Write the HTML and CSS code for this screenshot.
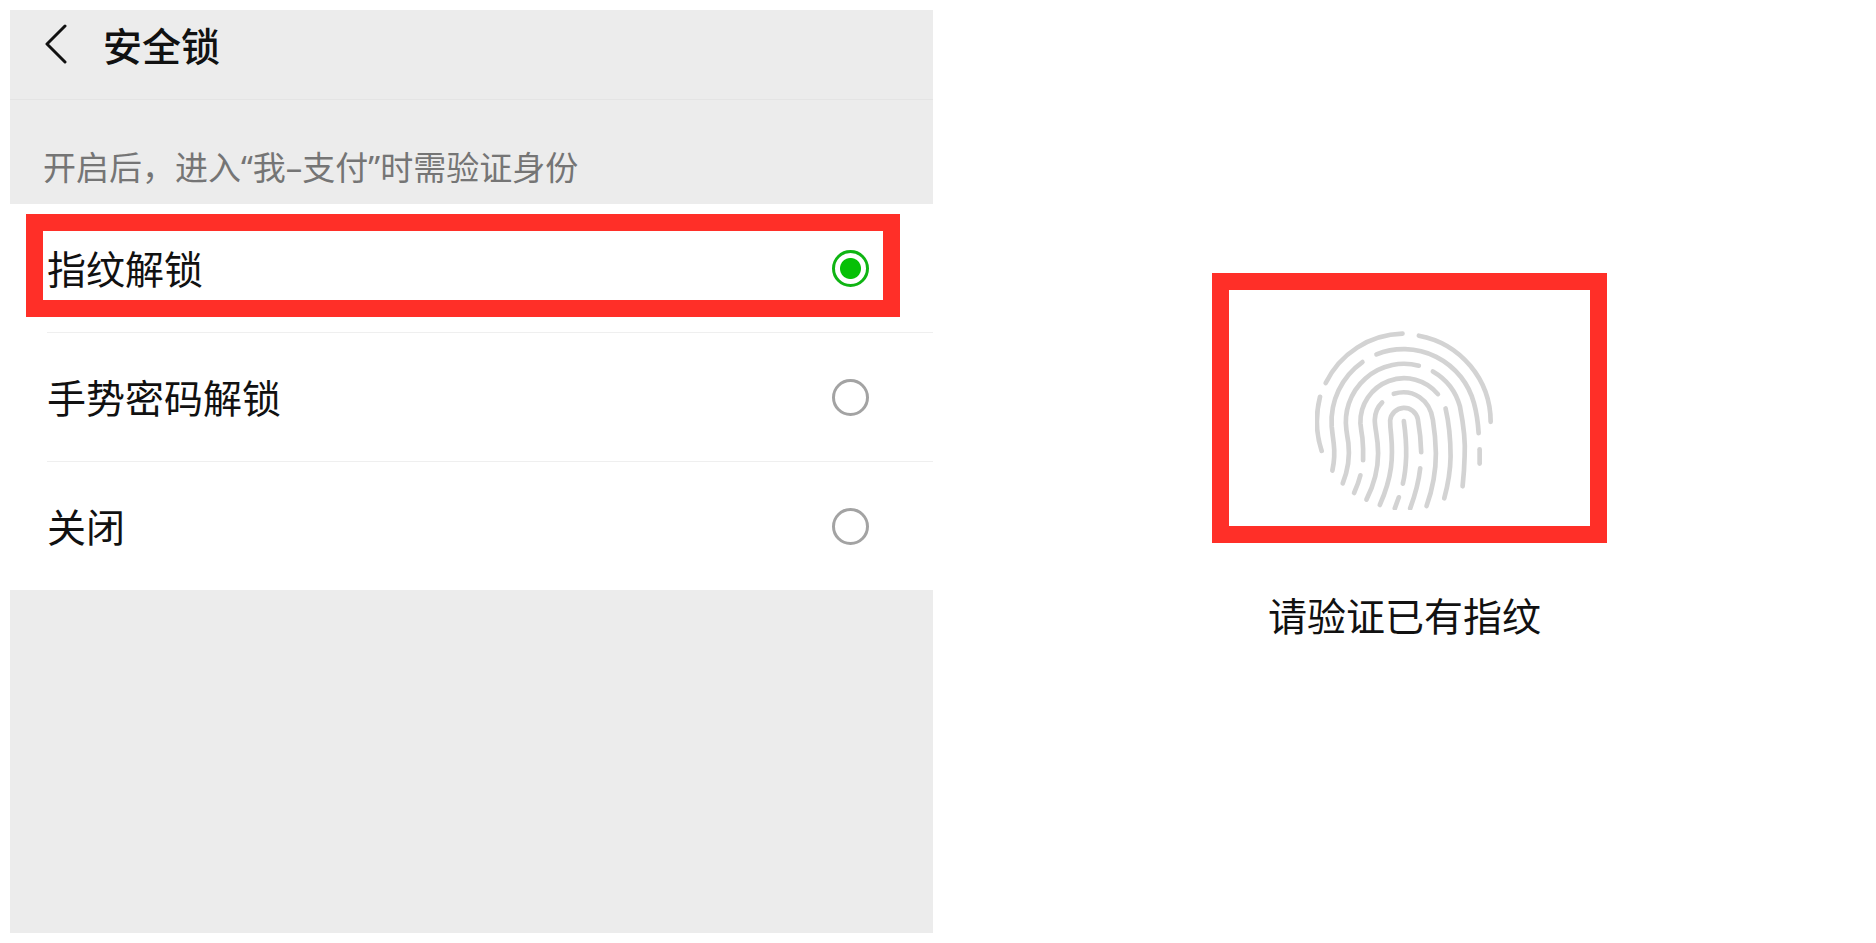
FILE: index.html
```html
<!DOCTYPE html>
<html lang="zh-CN">
<head>
<meta charset="utf-8">
<title>安全锁</title>
<link rel="stylesheet" href="styles.css">
</head>
<body>
<main class="screens">
  <section class="screen settings">
    <header class="topbar">
      <button class="back" type="button" aria-label="返回">
        <svg class="back-icon" viewBox="0 0 24 42" aria-hidden="true"><path d="M22 3 4 21 22 39"/></svg>
      </button>
      <h1 class="title">安全锁</h1>
    </header>
    <p class="hint" id="hint">开启后，进入“我–支付”时需验证身份</p>
    <div class="options" role="radiogroup" aria-labelledby="hint">
      <label class="option highlighted">
        <span class="option-label">指纹解锁</span>
        <input class="radio" type="radio" name="lock" checked>
      </label>
      <label class="option">
        <span class="option-label">手势密码解锁</span>
        <input class="radio" type="radio" name="lock">
      </label>
      <label class="option">
        <span class="option-label">关闭</span>
        <input class="radio" type="radio" name="lock">
      </label>
    </div>
  </section>
  <section class="screen verify">
    <div class="sensor">
      <svg class="fingerprint" viewBox="346 214 536 536" aria-hidden="true">
        <path d="M608 222A263 263 0 0 0 378 370"/>
        <path d="M657 228A263 263 0 0 1 872 486"/>
        <path d="M361 411Q340 495 366 573"/>
        <path d="M530 284A218 218 0 0 1 822 430Q833 470 836 520"/>
        <path d="M488 307A218 218 0 0 0 396 500Q398 520 402 550Q407 590 398 632"/>
        <path d="M657 318A174 174 0 0 0 440 510Q442 525 446 550Q453 610 429 670"/>
        <path d="M699 335A174 174 0 0 1 780 440Q798 530 794 590Q793 630 788 679"/>
        <path d="M714 403A131 131 0 0 0 482 490Q484 510 488 535Q491 565 490 601"/>
        <path d="M737 446Q752 510 752 590Q751 650 733 715"/>
        <path d="M482 646Q476 670 463 699"/>
        <path d="M547 428Q526 448 525 480C525 510 535 530 535 580Q535 650 500 719"/>
        <path d="M582 402C640 385 690 420 699 480Q707 530 708 580Q708 660 680 738"/>
        <path d="M664 577Q663 530 654 478A42 42 0 0 0 571 482Q571 500 574 525C580 590 578 650 540 735"/>
        <path d="M612 484Q620 540 619 590Q617 640 609 671"/>
        <path d="M597 712L585 745"/>
        <path d="M661 625Q655 680 631 745"/>
        <path d="M839 568V611"/>
      </svg>
    </div>
    <p class="prompt">请验证已有指纹</p>
  </section>
</main>
</body>
</html>
```
FILE: styles.css
```css
* { box-sizing: border-box; }

body {
  margin: 0;
  background: #fff;
  color: #111;
  font-family: "Noto Sans CJK SC", sans-serif;
}

.screens {
  display: grid;
  grid-template-columns: 1fr 1fr;
  gap: 10px;
  min-height: 100vh;
  padding: 10px;
}

.settings { background: #ececec; }

.topbar {
  display: flex;
  align-items: center;
  gap: 36px;
  padding: 0 33px 21px;
  border-bottom: 1px solid #e4e4e4;
}

.back {
  display: flex;
  padding: 0;
  border: 0;
  background: none;
}

.back-icon {
  width: 24px;
  height: 42px;
  fill: none;
  stroke: #111;
  stroke-width: 3;
  stroke-linecap: round;
  stroke-linejoin: round;
}

.title {
  margin: 0;
  font-size: 39px;
  font-weight: 500;
  line-height: 68px;
}

.hint {
  margin: 0;
  padding: 44px 33px 12px;
  color: #757575;
  font-family: "Noto Sans", "Noto Sans CJK SC", sans-serif;
  font-size: 33px;
  line-height: 48px;
}

.options { background: #fff; }

.option {
  position: relative;
  display: flex;
  align-items: center;
  justify-content: space-between;
  margin-left: 37px;
  padding: 34px 64px 34px 0;
  border-bottom: 1px solid #efefef;
}

.option:last-child { border-bottom: 0; }

.option-label {
  padding-bottom: 2px;
  font-size: 39px;
  line-height: 58px;
}

.highlighted::after {
  content: "";
  position: absolute;
  inset: 10px 33px 15px -21px;
  border: 17px solid #ff2f28;
}

.radio {
  appearance: none;
  width: 37px;
  height: 37px;
  margin: 0;
  border: 3px solid #a3a3a3;
  border-radius: 50%;
}

.radio:checked {
  border-color: #0fb413;
  background: radial-gradient(circle, #06c006 10px, #fff 11px);
}

.verify {
  display: flex;
  flex-direction: column;
  align-items: center;
  gap: 75px;
  padding-top: 321px;
}

.sensor {
  position: relative;
  display: flex;
}

.sensor::after {
  content: "";
  position: absolute;
  inset: -58px -113px -33px -103px;
  border: 17px solid #ff2f28;
}

.fingerprint {
  width: 179px;
  height: 179px;
  fill: none;
  stroke: #d3d3d3;
  stroke-width: 14;
  stroke-linecap: round;
}

.prompt {
  margin: 0;
  font-size: 39px;
  line-height: 58px;
}
```
